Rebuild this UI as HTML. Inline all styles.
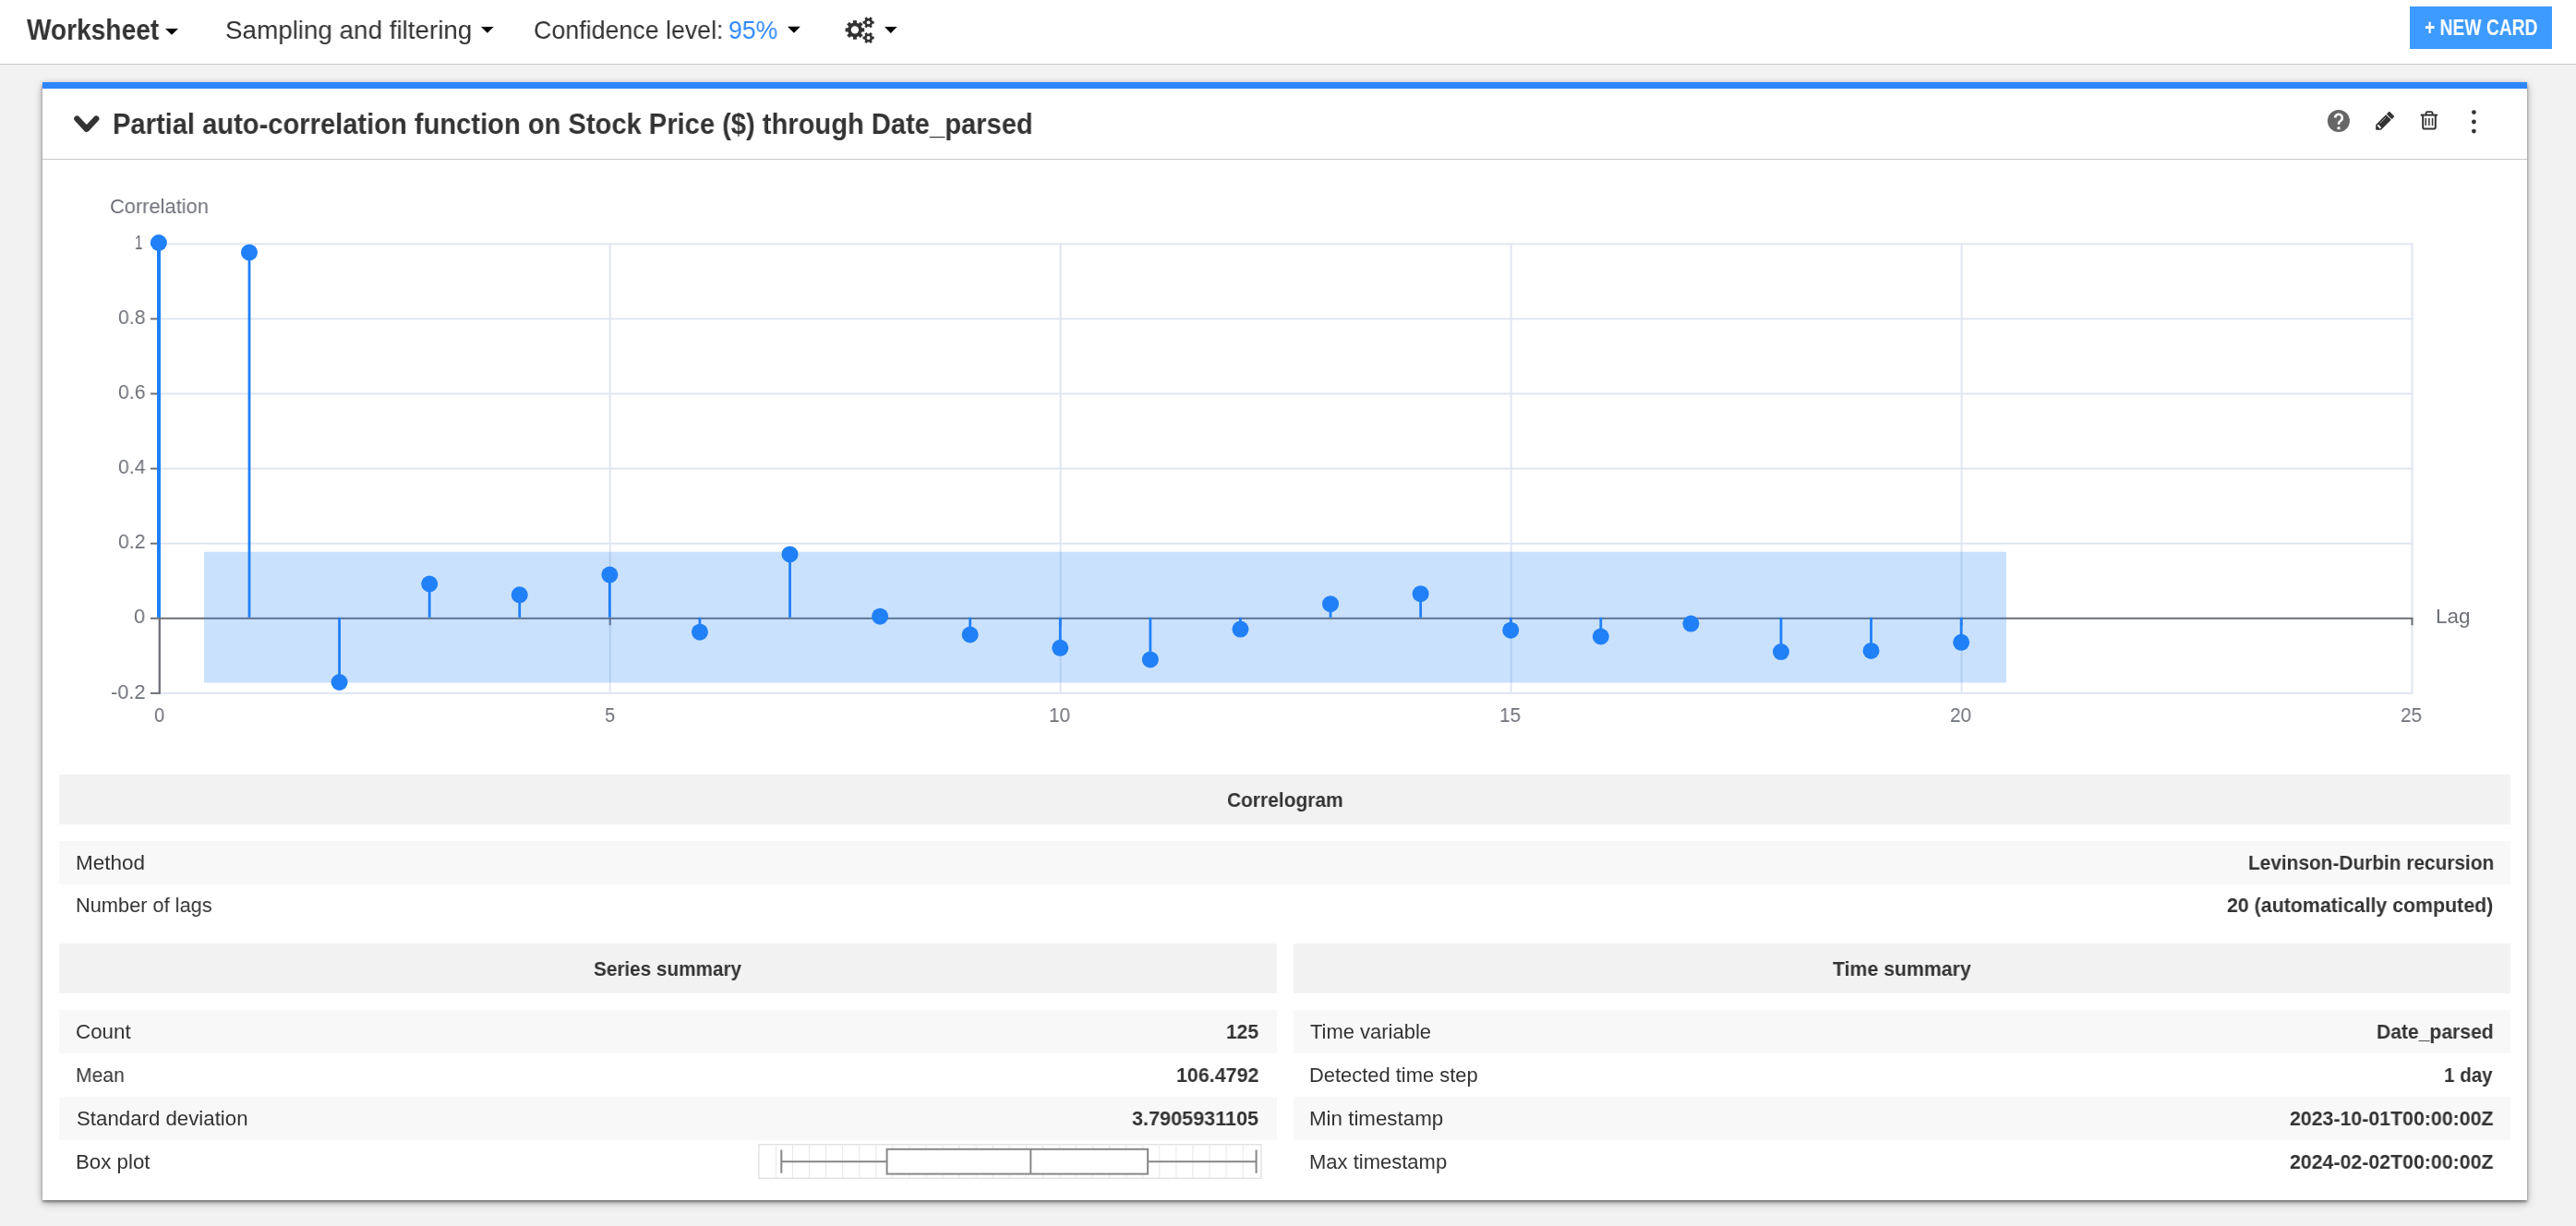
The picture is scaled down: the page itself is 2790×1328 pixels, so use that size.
<!DOCTYPE html>
<html><head><meta charset="utf-8"><title>Worksheet</title>
<style>
html,body{margin:0;padding:0;width:2790px;height:1328px;overflow:hidden;background:#f2f2f2;font-family:"Liberation Sans",sans-serif;}
.a{position:absolute;}
.t{position:absolute;white-space:nowrap;transform-origin:0 0;will-change:transform;font-family:"Liberation Sans",sans-serif;}
svg{position:absolute;left:0;top:0;}
</style></head><body>
<div class="a" style="left:0;top:0;width:2790px;height:69px;background:#fff;border-bottom:1px solid #c9c9c9"></div>
<div class="a" style="left:2610px;top:7px;width:154px;height:46px;background:#3d9aff"></div>
<div class="a" style="left:46px;top:89px;width:2691px;height:1211px;background:#fff;box-shadow:0 2px 3px rgba(0,0,0,0.4),0 3px 9px rgba(0,0,0,0.3)"></div>
<div class="a" style="left:46px;top:89px;width:2691px;height:7px;background:#2e86fb"></div>
<div class="a" style="left:46px;top:172px;width:2691px;height:1px;background:#c9c9c9"></div>
<div class="a" style="left:64.0px;top:839.0px;width:2654.7px;height:53.7px;background:#f2f2f2"></div>
<div class="a" style="left:64.0px;top:911.3px;width:2654.7px;height:46.8px;background:#f8f8f8"></div>
<div class="a" style="left:64.0px;top:1022.2px;width:1318.8px;height:53.5px;background:#f2f2f2"></div>
<div class="a" style="left:1401.0px;top:1022.2px;width:1317.6px;height:53.5px;background:#f2f2f2"></div>
<div class="a" style="left:64.0px;top:1094.2px;width:1318.8px;height:46.9px;background:#f8f8f8"></div>
<div class="a" style="left:1401.0px;top:1094.2px;width:1317.6px;height:46.9px;background:#f8f8f8"></div>
<div class="a" style="left:64.0px;top:1188.0px;width:1318.8px;height:46.9px;background:#f8f8f8"></div>
<div class="a" style="left:1401.0px;top:1188.0px;width:1317.6px;height:46.9px;background:#f8f8f8"></div>
<svg width="2790" height="1328" viewBox="0 0 2790 1328"><path d="M179.05,31 L193,31 L186.025,37.7 Z" fill="#000"/><path d="M521,29 L534.7,29 L527.85,35.8 Z" fill="#000"/><path d="M853,28.8 L866.8,28.8 L859.9,35.8 Z" fill="#000"/><path d="M958,28.9 L971.6,28.9 L964.8,35.9 Z" fill="#000"/><circle cx="925.9" cy="32.4" r="7.8" fill="#333"/><rect x="923.9" y="22.099999999999998" width="4.0" height="10.3" fill="#333" transform="rotate(0.0 925.9 32.4)"/><rect x="923.9" y="22.099999999999998" width="4.0" height="10.3" fill="#333" transform="rotate(45.0 925.9 32.4)"/><rect x="923.9" y="22.099999999999998" width="4.0" height="10.3" fill="#333" transform="rotate(90.0 925.9 32.4)"/><rect x="923.9" y="22.099999999999998" width="4.0" height="10.3" fill="#333" transform="rotate(135.0 925.9 32.4)"/><rect x="923.9" y="22.099999999999998" width="4.0" height="10.3" fill="#333" transform="rotate(180.0 925.9 32.4)"/><rect x="923.9" y="22.099999999999998" width="4.0" height="10.3" fill="#333" transform="rotate(225.0 925.9 32.4)"/><rect x="923.9" y="22.099999999999998" width="4.0" height="10.3" fill="#333" transform="rotate(270.0 925.9 32.4)"/><rect x="923.9" y="22.099999999999998" width="4.0" height="10.3" fill="#333" transform="rotate(315.0 925.9 32.4)"/><circle cx="925.9" cy="32.4" r="4.2" fill="#fff"/><circle cx="940.6" cy="24.3" r="4.6" fill="#333"/><rect x="939.2" y="18.200000000000003" width="2.8" height="6.1" fill="#333" transform="rotate(30.0 940.6 24.3)"/><rect x="939.2" y="18.200000000000003" width="2.8" height="6.1" fill="#333" transform="rotate(90.0 940.6 24.3)"/><rect x="939.2" y="18.200000000000003" width="2.8" height="6.1" fill="#333" transform="rotate(150.0 940.6 24.3)"/><rect x="939.2" y="18.200000000000003" width="2.8" height="6.1" fill="#333" transform="rotate(210.0 940.6 24.3)"/><rect x="939.2" y="18.200000000000003" width="2.8" height="6.1" fill="#333" transform="rotate(270.0 940.6 24.3)"/><rect x="939.2" y="18.200000000000003" width="2.8" height="6.1" fill="#333" transform="rotate(330.0 940.6 24.3)"/><circle cx="940.6" cy="24.3" r="1.9" fill="#fff"/><circle cx="940.6" cy="41.0" r="4.6" fill="#333"/><rect x="939.2" y="34.9" width="2.8" height="6.1" fill="#333" transform="rotate(30.0 940.6 41.0)"/><rect x="939.2" y="34.9" width="2.8" height="6.1" fill="#333" transform="rotate(90.0 940.6 41.0)"/><rect x="939.2" y="34.9" width="2.8" height="6.1" fill="#333" transform="rotate(150.0 940.6 41.0)"/><rect x="939.2" y="34.9" width="2.8" height="6.1" fill="#333" transform="rotate(210.0 940.6 41.0)"/><rect x="939.2" y="34.9" width="2.8" height="6.1" fill="#333" transform="rotate(270.0 940.6 41.0)"/><rect x="939.2" y="34.9" width="2.8" height="6.1" fill="#333" transform="rotate(330.0 940.6 41.0)"/><circle cx="940.6" cy="41.0" r="1.9" fill="#fff"/><polyline points="83.4,128.6 93.8,139.7 104.2,128.6" fill="none" stroke="#333" stroke-width="6.4" stroke-linecap="round" stroke-linejoin="round"/><circle cx="2532.9" cy="131" r="12" fill="#666"/><path d="M2529.2,127.6 a3.8,3.8 0 1 1 6.2,2.9 c-1.5,1.1 -2.4,1.8 -2.4,3.6 v0.6" fill="none" stroke="#fff" stroke-width="2.6"/><rect x="2531.5" y="137.4" width="3" height="2.8" fill="#fff"/><g transform="translate(2576.03,137.95) rotate(-45)"><path d="M-4,0 L0,-4 L0,4 Z" fill="#333"/><rect x="-0.05" y="-4" width="15.5" height="8" fill="#333"/><rect x="16.4" y="-4" width="4.3" height="8" rx="1" fill="#333"/><line x1="4" y1="-1.9" x2="13.4" y2="-1.9" stroke="#bbb" stroke-width="0.8"/><line x1="1.2" y1="-1.6" x2="1.2" y2="1.6" stroke="#fff" stroke-width="1.8" stroke-linecap="round"/></g><path d="M2621.7,124.6 H2640" stroke="#333" stroke-width="2"/><path d="M2627.6,124.6 V122.8 q0,-1.6 1.6,-1.6 h3.8 q1.6,0 1.6,1.6 V124.6" fill="none" stroke="#333" stroke-width="1.8"/><path d="M2624.2,124.6 V137.4 q0,2.2 2.2,2.2 h9.2 q2.2,0 2.2,-2.2 V124.6" fill="none" stroke="#333" stroke-width="2"/><path d="M2627.3,128 V136 M2630.9,128 V136 M2634.5,128 V136" stroke="#333" stroke-width="1.5"/><circle cx="2679.4" cy="121.6" r="2.4" fill="#333"/><circle cx="2679.4" cy="132" r="2.4" fill="#333"/><circle cx="2679.4" cy="142.1" r="2.4" fill="#333"/><rect x="173.8" y="263.30" width="2439.7" height="2" fill="#e0e6f1"/><rect x="173.8" y="344.40" width="2439.7" height="2" fill="#e0e6f1"/><rect x="173.8" y="425.50" width="2439.7" height="2" fill="#e0e6f1"/><rect x="173.8" y="506.60" width="2439.7" height="2" fill="#e0e6f1"/><rect x="173.8" y="587.70" width="2439.7" height="2" fill="#e0e6f1"/><rect x="173.8" y="749.90" width="2439.7" height="2" fill="#e0e6f1"/><rect x="659.74" y="263.30" width="2" height="487.60" fill="#e0e6f1"/><rect x="1147.68" y="263.30" width="2" height="487.60" fill="#e0e6f1"/><rect x="1635.62" y="263.30" width="2" height="487.60" fill="#e0e6f1"/><rect x="2123.56" y="263.30" width="2" height="487.60" fill="#e0e6f1"/><rect x="2611.50" y="263.30" width="2" height="487.60" fill="#e0e6f1"/><rect x="172.8" y="668.80" width="2440.70" height="2" fill="#6e7079"/><rect x="171.65" y="263.30" width="2.3" height="488.60" fill="#6e7079"/><rect x="163" y="263.30" width="9.800000000000011" height="2" fill="#6e7079"/><rect x="163" y="344.40" width="9.800000000000011" height="2" fill="#6e7079"/><rect x="163" y="425.50" width="9.800000000000011" height="2" fill="#6e7079"/><rect x="163" y="506.60" width="9.800000000000011" height="2" fill="#6e7079"/><rect x="163" y="587.70" width="9.800000000000011" height="2" fill="#6e7079"/><rect x="163" y="668.80" width="9.800000000000011" height="2" fill="#6e7079"/><rect x="163" y="749.90" width="9.800000000000011" height="2" fill="#6e7079"/><rect x="659.74" y="669.80" width="2" height="7.5" fill="#6e7079"/><rect x="1147.68" y="669.80" width="2" height="7.5" fill="#6e7079"/><rect x="1635.62" y="669.80" width="2" height="7.5" fill="#6e7079"/><rect x="2123.56" y="669.80" width="2" height="7.5" fill="#6e7079"/><rect x="2611.50" y="669.80" width="2" height="7.5" fill="#6e7079"/><rect x="221" y="597.7" width="1952" height="141.79999999999995" fill="rgb(32,128,248)" fill-opacity="0.24"/><rect x="170.00" y="263.00" width="4.0" height="405.80" fill="#2080f8"/><circle cx="171.90" cy="263.0" r="9" fill="#2080f8"/><rect x="268.59" y="273.40" width="2.8" height="395.40" fill="#2080f8"/><circle cx="269.99" cy="273.4" r="9" fill="#2080f8"/><rect x="366.18" y="668.80" width="2.8" height="70.20" fill="#2080f8"/><circle cx="367.58" cy="739.0" r="9" fill="#2080f8"/><rect x="463.76" y="632.50" width="2.8" height="36.30" fill="#2080f8"/><circle cx="465.16" cy="632.5" r="9" fill="#2080f8"/><rect x="561.35" y="644.30" width="2.8" height="24.50" fill="#2080f8"/><circle cx="562.75" cy="644.3" r="9" fill="#2080f8"/><rect x="658.94" y="622.60" width="2.8" height="46.20" fill="#2080f8"/><circle cx="660.34" cy="622.6" r="9" fill="#2080f8"/><rect x="756.53" y="668.80" width="2.8" height="15.90" fill="#2080f8"/><circle cx="757.93" cy="684.7" r="9" fill="#2080f8"/><rect x="854.12" y="600.40" width="2.8" height="68.40" fill="#2080f8"/><circle cx="855.52" cy="600.4" r="9" fill="#2080f8"/><rect x="951.70" y="667.70" width="2.8" height="1.10" fill="#2080f8"/><circle cx="953.10" cy="667.7" r="9" fill="#2080f8"/><rect x="1049.29" y="668.80" width="2.8" height="18.70" fill="#2080f8"/><circle cx="1050.69" cy="687.5" r="9" fill="#2080f8"/><rect x="1146.88" y="668.80" width="2.8" height="33.00" fill="#2080f8"/><circle cx="1148.28" cy="701.8" r="9" fill="#2080f8"/><rect x="1244.47" y="668.80" width="2.8" height="45.60" fill="#2080f8"/><circle cx="1245.87" cy="714.4" r="9" fill="#2080f8"/><rect x="1342.06" y="668.80" width="2.8" height="12.80" fill="#2080f8"/><circle cx="1343.46" cy="681.6" r="9" fill="#2080f8"/><rect x="1439.64" y="654.20" width="2.8" height="14.60" fill="#2080f8"/><circle cx="1441.04" cy="654.2" r="9" fill="#2080f8"/><rect x="1537.23" y="643.20" width="2.8" height="25.60" fill="#2080f8"/><circle cx="1538.63" cy="643.2" r="9" fill="#2080f8"/><rect x="1634.82" y="668.80" width="2.8" height="13.90" fill="#2080f8"/><circle cx="1636.22" cy="682.7" r="9" fill="#2080f8"/><rect x="1732.41" y="668.80" width="2.8" height="20.70" fill="#2080f8"/><circle cx="1733.81" cy="689.5" r="9" fill="#2080f8"/><rect x="1830.00" y="668.80" width="2.8" height="6.80" fill="#2080f8"/><circle cx="1831.40" cy="675.6" r="9" fill="#2080f8"/><rect x="1927.58" y="668.80" width="2.8" height="37.30" fill="#2080f8"/><circle cx="1928.98" cy="706.1" r="9" fill="#2080f8"/><rect x="2025.17" y="668.80" width="2.8" height="36.10" fill="#2080f8"/><circle cx="2026.57" cy="704.9" r="9" fill="#2080f8"/><rect x="2122.76" y="668.80" width="2.8" height="27.00" fill="#2080f8"/><circle cx="2124.16" cy="695.8" r="9" fill="#2080f8"/><rect x="821.9" y="1239.8" width="544.1" height="36.5" fill="none" stroke="#dddddd" stroke-width="1.2"/><rect x="839.90" y="1239.3" width="1" height="37.5" fill="#e8e8e8"/><rect x="857.96" y="1239.3" width="1" height="37.5" fill="#e8e8e8"/><rect x="876.02" y="1239.3" width="1" height="37.5" fill="#e8e8e8"/><rect x="894.08" y="1239.3" width="1" height="37.5" fill="#e8e8e8"/><rect x="912.14" y="1239.3" width="1" height="37.5" fill="#e8e8e8"/><rect x="930.20" y="1239.3" width="1" height="37.5" fill="#e8e8e8"/><rect x="948.26" y="1239.3" width="1" height="37.5" fill="#e8e8e8"/><rect x="966.32" y="1239.3" width="1" height="37.5" fill="#e8e8e8"/><rect x="984.38" y="1239.3" width="1" height="37.5" fill="#e8e8e8"/><rect x="1002.44" y="1239.3" width="1" height="37.5" fill="#e8e8e8"/><rect x="1020.50" y="1239.3" width="1" height="37.5" fill="#e8e8e8"/><rect x="1038.56" y="1239.3" width="1" height="37.5" fill="#e8e8e8"/><rect x="1056.62" y="1239.3" width="1" height="37.5" fill="#e8e8e8"/><rect x="1074.68" y="1239.3" width="1" height="37.5" fill="#e8e8e8"/><rect x="1092.74" y="1239.3" width="1" height="37.5" fill="#e8e8e8"/><rect x="1110.80" y="1239.3" width="1" height="37.5" fill="#e8e8e8"/><rect x="1128.86" y="1239.3" width="1" height="37.5" fill="#e8e8e8"/><rect x="1146.92" y="1239.3" width="1" height="37.5" fill="#e8e8e8"/><rect x="1164.98" y="1239.3" width="1" height="37.5" fill="#e8e8e8"/><rect x="1183.04" y="1239.3" width="1" height="37.5" fill="#e8e8e8"/><rect x="1201.10" y="1239.3" width="1" height="37.5" fill="#e8e8e8"/><rect x="1219.16" y="1239.3" width="1" height="37.5" fill="#e8e8e8"/><rect x="1237.22" y="1239.3" width="1" height="37.5" fill="#e8e8e8"/><rect x="1255.28" y="1239.3" width="1" height="37.5" fill="#e8e8e8"/><rect x="1273.34" y="1239.3" width="1" height="37.5" fill="#e8e8e8"/><rect x="1291.40" y="1239.3" width="1" height="37.5" fill="#e8e8e8"/><rect x="1309.46" y="1239.3" width="1" height="37.5" fill="#e8e8e8"/><rect x="1327.52" y="1239.3" width="1" height="37.5" fill="#e8e8e8"/><rect x="1345.58" y="1239.3" width="1" height="37.5" fill="#e8e8e8"/><path d="M846.3,1258.2 H960.6 M1243.1,1258.2 H1360.6 M846.3,1245.6 V1270.8 M1360.6,1245.6 V1270.8" stroke="#888" stroke-width="2"/><rect x="960.6" y="1244.8" width="282.4999999999999" height="26.799999999999955" fill="#fff" stroke="#888" stroke-width="2"/><path d="M1116.3,1244.8 V1271.6" stroke="#888" stroke-width="2"/></svg>
<div class="t" style="left:28.50px;top:16.13px;font-size:31.98px;line-height:31.98px;font-weight:700;color:#333;transform:scaleX(0.8792)">Worksheet</div>
<div class="t" style="left:243.80px;top:19.28px;font-size:27.91px;line-height:27.91px;font-weight:400;color:#333;transform:scaleX(0.9962)">Sampling and filtering</div>
<div class="t" style="left:578.34px;top:19.28px;font-size:27.91px;line-height:27.91px;font-weight:400;color:#333;transform:scaleX(0.9597)">Confidence level:</div>
<div class="t" style="left:789.05px;top:19.28px;font-size:27.91px;line-height:27.91px;font-weight:400;color:#2d87fb;transform:scaleX(0.9533)">95%</div>
<div class="t" style="left:2625.70px;top:18.51px;font-size:23.26px;line-height:23.26px;font-weight:700;color:#fff;transform:scaleX(0.8286)">+ NEW CARD</div>
<div class="t" style="left:122.14px;top:118.55px;font-size:31.25px;line-height:31.25px;font-weight:700;color:#333;transform:scaleX(0.9318)">Partial auto-correlation function on Stock Price ($) through Date_parsed</div>
<div class="t" style="left:118.52px;top:213.18px;font-size:22.24px;line-height:22.24px;font-weight:400;color:#6e7079;transform:scaleX(0.9829)">Correlation</div>
<div class="t" style="left:146.42px;top:251.93px;font-size:22.53px;line-height:22.53px;font-weight:400;color:#6e7079;transform:scaleX(0.6818)">1</div>
<div class="t" style="left:127.90px;top:333.03px;font-size:22.53px;line-height:22.53px;font-weight:400;color:#6e7079;transform:scaleX(0.9455)">0.8</div>
<div class="t" style="left:127.90px;top:414.13px;font-size:22.53px;line-height:22.53px;font-weight:400;color:#6e7079;transform:scaleX(0.9455)">0.6</div>
<div class="t" style="left:127.90px;top:495.23px;font-size:22.53px;line-height:22.53px;font-weight:400;color:#6e7079;transform:scaleX(0.9455)">0.4</div>
<div class="t" style="left:127.90px;top:576.33px;font-size:22.53px;line-height:22.53px;font-weight:400;color:#6e7079;transform:scaleX(0.9455)">0.2</div>
<div class="t" style="left:145.30px;top:657.43px;font-size:22.53px;line-height:22.53px;font-weight:400;color:#6e7079;transform:scaleX(0.9667)">0</div>
<div class="t" style="left:119.93px;top:738.53px;font-size:22.53px;line-height:22.53px;font-weight:400;color:#6e7079;transform:scaleX(0.9685)">-0.2</div>
<div class="t" style="left:166.90px;top:763.70px;font-size:22.09px;line-height:22.09px;font-weight:400;color:#6e7079;transform:scaleX(0.9167)">0</div>
<div class="t" style="left:654.89px;top:763.70px;font-size:22.09px;line-height:22.09px;font-weight:400;color:#6e7079;transform:scaleX(0.9083)">5</div>
<div class="t" style="left:1136.39px;top:763.70px;font-size:22.09px;line-height:22.09px;font-weight:400;color:#6e7079;transform:scaleX(0.9408)">10</div>
<div class="t" style="left:1624.33px;top:763.70px;font-size:22.09px;line-height:22.09px;font-weight:400;color:#6e7079;transform:scaleX(0.9408)">15</div>
<div class="t" style="left:2112.27px;top:763.70px;font-size:22.09px;line-height:22.09px;font-weight:400;color:#6e7079;transform:scaleX(0.9408)">20</div>
<div class="t" style="left:2600.21px;top:763.70px;font-size:22.09px;line-height:22.09px;font-weight:400;color:#6e7079;transform:scaleX(0.9408)">25</div>
<div class="t" style="left:2638.00px;top:657.05px;font-size:22.38px;line-height:22.38px;font-weight:400;color:#6e7079;transform:scaleX(1.0032)">Lag</div>
<div class="t" style="left:1329.20px;top:854.66px;font-size:22.97px;line-height:22.97px;font-weight:700;color:#333;transform:scaleX(0.9109)">Correlogram</div>
<div class="t" style="left:643.20px;top:1037.58px;font-size:22.82px;line-height:22.82px;font-weight:700;color:#333;transform:scaleX(0.9078)">Series summary</div>
<div class="t" style="left:1985.00px;top:1037.58px;font-size:22.82px;line-height:22.82px;font-weight:700;color:#333;transform:scaleX(0.9321)">Time summary</div>
<div class="t" style="left:82.07px;top:923.64px;font-size:21.80px;line-height:21.80px;font-weight:400;color:#333;transform:scaleX(1.0300)">Method</div>
<div class="t" style="left:2435.04px;top:923.64px;font-size:21.80px;line-height:21.80px;font-weight:700;color:#333;transform:scaleX(0.9557)">Levinson-Durbin recursion</div>
<div class="t" style="left:82.10px;top:970.44px;font-size:21.80px;line-height:21.80px;font-weight:400;color:#333;transform:scaleX(0.9986)">Number of lags</div>
<div class="t" style="left:2412.00px;top:970.44px;font-size:21.80px;line-height:21.80px;font-weight:700;color:#333;transform:scaleX(0.9794)">20 (automatically computed)</div>
<div class="t" style="left:81.88px;top:1106.94px;font-size:21.80px;line-height:21.80px;font-weight:400;color:#333;transform:scaleX(1.0244)">Count</div>
<div class="t" style="left:1328.34px;top:1106.94px;font-size:21.80px;line-height:21.80px;font-weight:700;color:#333;transform:scaleX(0.9647)">125</div>
<div class="t" style="left:81.93px;top:1153.84px;font-size:21.80px;line-height:21.80px;font-weight:400;color:#333;transform:scaleX(0.9675)">Mean</div>
<div class="t" style="left:1274.02px;top:1153.84px;font-size:21.80px;line-height:21.80px;font-weight:700;color:#333;transform:scaleX(0.9834)">106.4792</div>
<div class="t" style="left:82.90px;top:1200.74px;font-size:21.80px;line-height:21.80px;font-weight:400;color:#333;transform:scaleX(1.0208)">Standard deviation</div>
<div class="t" style="left:1226.30px;top:1200.74px;font-size:21.80px;line-height:21.80px;font-weight:700;color:#333;transform:scaleX(0.9922)">3.7905931105</div>
<div class="t" style="left:81.88px;top:1247.64px;font-size:21.80px;line-height:21.80px;font-weight:400;color:#333;transform:scaleX(1.0218)">Box plot</div>
<div class="t" style="left:1419.30px;top:1106.94px;font-size:21.80px;line-height:21.80px;font-weight:400;color:#333;transform:scaleX(1.0078)">Time variable</div>
<div class="t" style="left:2574.43px;top:1106.94px;font-size:21.80px;line-height:21.80px;font-weight:700;color:#333;transform:scaleX(0.9679)">Date_parsed</div>
<div class="t" style="left:1418.30px;top:1153.84px;font-size:21.80px;line-height:21.80px;font-weight:400;color:#333;transform:scaleX(1.0049)">Detected time step</div>
<div class="t" style="left:2647.26px;top:1153.84px;font-size:21.80px;line-height:21.80px;font-weight:700;color:#333;transform:scaleX(0.9448)">1 day</div>
<div class="t" style="left:1418.28px;top:1200.74px;font-size:21.80px;line-height:21.80px;font-weight:400;color:#333;transform:scaleX(1.0243)">Min timestamp</div>
<div class="t" style="left:2479.60px;top:1200.74px;font-size:21.80px;line-height:21.80px;font-weight:700;color:#333;transform:scaleX(0.9784)">2023-10-01T00:00:00Z</div>
<div class="t" style="left:1418.29px;top:1247.64px;font-size:21.80px;line-height:21.80px;font-weight:400;color:#333;transform:scaleX(1.0092)">Max timestamp</div>
<div class="t" style="left:2479.60px;top:1247.64px;font-size:21.80px;line-height:21.80px;font-weight:700;color:#333;transform:scaleX(0.9784)">2024-02-02T00:00:00Z</div>
</body></html>
